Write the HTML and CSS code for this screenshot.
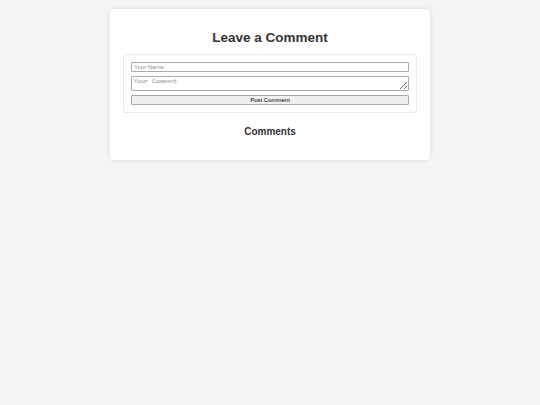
FILE: index.html
```html
<!DOCTYPE html>
<html lang="en">
<head>
    <meta charset="UTF-8">
    <meta name="viewport" content="width=device-width, initial-scale=1.0">
    <title>Comments</title>
    <link rel="stylesheet" href="styles.css">
</head>
<body>
    <div class="wrapper">
        <h1>Leave a Comment</h1>
        <form id="commentForm">
            <input type="text" id="name" placeholder="Your Name">
            <textarea id="comment" placeholder="Your Comment"></textarea>
            <button type="submit">Post Comment</button>
        </form>
        <h2>Comments</h2>
        <div id="comments"></div>
    </div>
</body>
</html>
```

FILE: styles.css
```css
body {
    font-family: "Liberation Sans", Arial, sans-serif;
    margin: 0;
    padding: 9px 0;
    background-color: #f4f4f4;
    color: #333;
}
.wrapper {
    width: 300px;
    margin: 0 auto;
    padding: 10px;
    background: white;
    border-radius: 4px;
    box-shadow: 0 0 5px rgba(0, 0, 0, 0.1);
}
h1 {
    text-align: center;
    font-size: 13.5px;
    margin: 11px 0 9px;
}
h2 {
    text-align: center;
    font-size: 10px;
    margin: 13px 0 13px;
}
form {
    display: flex;
    flex-direction: column;
    gap: 4px;
    margin: 0 3px;
    padding: 7px;
    border: 1px solid #ebebeb;
    border-radius: 2px;
}
form input, form textarea, form button {
    box-sizing: border-box;
    width: 100%;
    margin: 0;
    font-size: 6px;
    border: 1px solid #aaa;
    border-radius: 1px;
    color: #000;
}
form input::placeholder, form textarea::placeholder {
    color: #8a8a8a;
}
form input {
    height: 10px;
    padding: 0 2px;
    font-family: "Liberation Sans", Arial, sans-serif;
}
form textarea {
    height: 15px;
    padding: 1px 2px;
    font-family: "Liberation Mono", monospace;
    resize: vertical;
}
form button {
    height: 10px;
    padding: 0;
    background: #efefef;
    font-family: "Liberation Sans", Arial, sans-serif;
    line-height: 8px;
}
```
